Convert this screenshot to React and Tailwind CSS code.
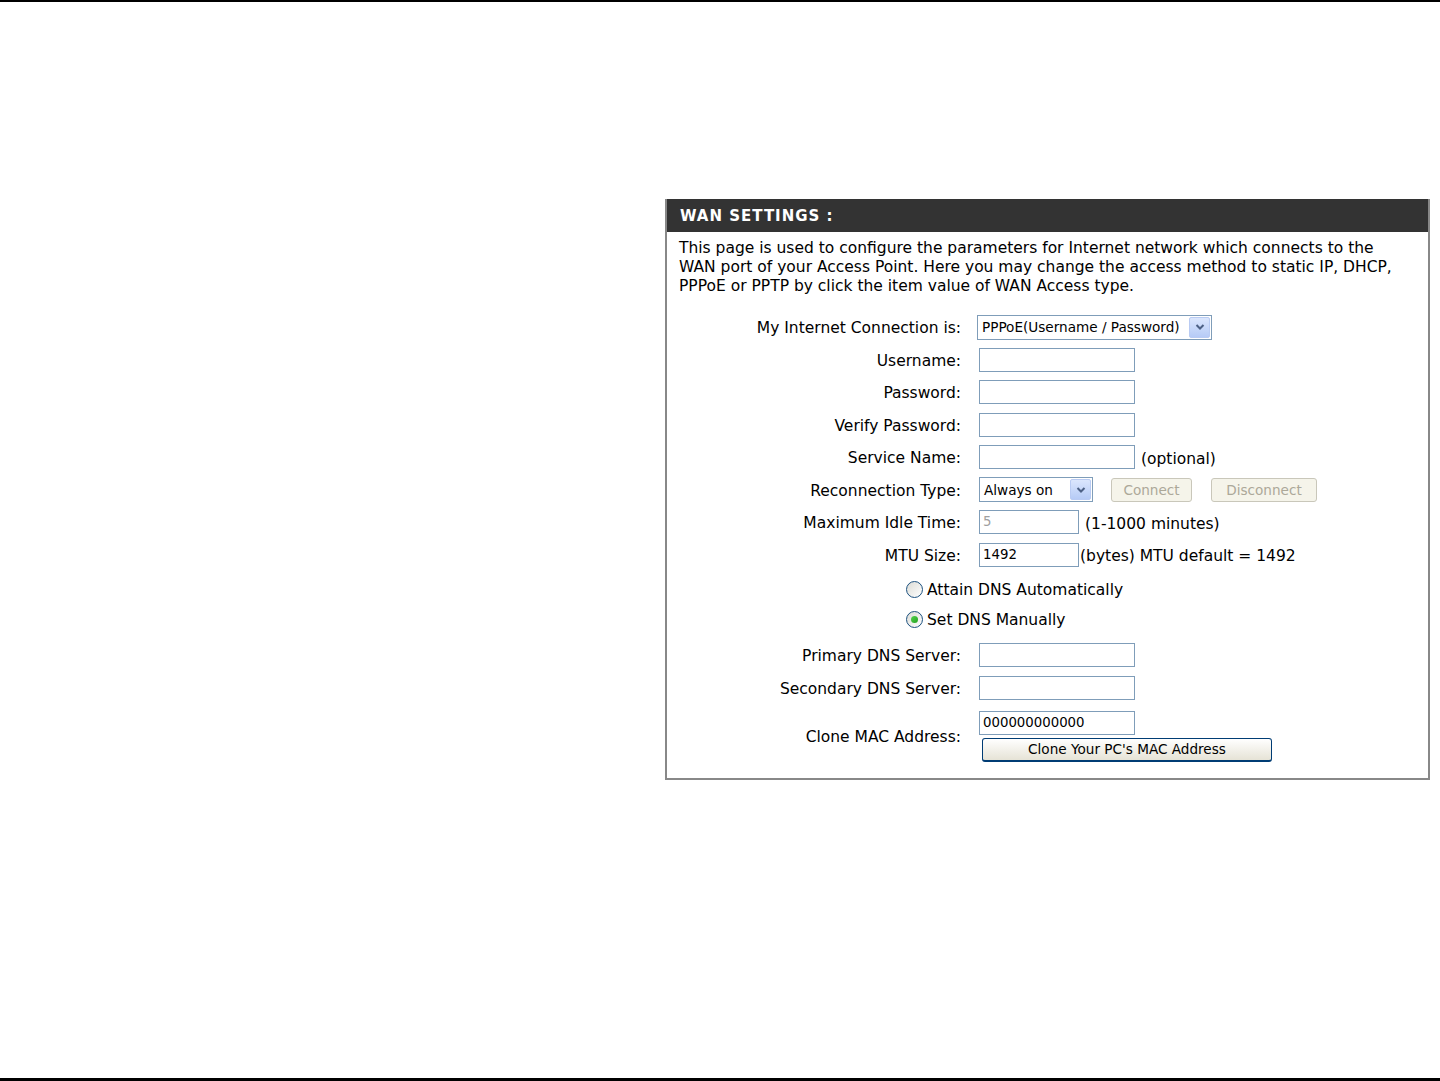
import React from 'react';

const font = { fontFamily: '"DejaVu Sans", Verdana, sans-serif' };

function Chevron() {
  return (
    <svg width="10" height="8" viewBox="0 0 10 8">
      <path d="M1.5 2 L5 5.5 L8.5 2" fill="none" stroke="#4d6185" strokeWidth="2" />
    </svg>
  );
}

function Select({ value, width }) {
  return (
    <div
      className={`flex items-center h-[25px] border border-[#7f9db9] bg-white pl-[4px] pr-[1px] ${width}`}
    >
      <span className="flex-1 text-[13.6px] text-black whitespace-nowrap">{value}</span>
      <div className="w-[21px] h-[21px] rounded-[2px] border border-[#b9cbf3] bg-gradient-to-b from-[#dbe6fd] to-[#b6cbf6] flex items-center justify-center">
        <Chevron />
      </div>
    </div>
  );
}

function Input({ value = '', width = 'w-[156px]', muted }) {
  return (
    <div
      className={`h-[24px] border border-[#7f9db9] bg-white px-[3px] flex items-center text-[13.3px] ${width} ${
        muted ? 'text-[#a0a0a0]' : 'text-black'
      }`}
    >
      {value}
    </div>
  );
}

function Row({ label, children, h = 'h-[32.5px]' }) {
  return (
    <div className={`flex items-center ${h}`}>
      <div className="w-[294px] shrink-0 text-right whitespace-nowrap pt-[3px]">{label}</div>
      <div className="flex items-center pl-[18px]">{children}</div>
    </div>
  );
}

function Radio({ checked, label }) {
  return (
    <div className="flex items-center h-[30px] pl-[239px]">
      <div className="w-[17px] h-[17px] rounded-full border border-[#1c5180] bg-gradient-to-br from-[#dcdcd6] to-white flex items-center justify-center">
        {checked && (
          <div className="w-[7px] h-[7px] rounded-full bg-gradient-to-br from-[#55d34c] to-[#21a121]" />
        )}
      </div>
      <span className="ml-[4px] pt-[3px]">{label}</span>
    </div>
  );
}

export default function App() {
  return (
    <div
      className="h-[1081px] bg-white border-t-2 border-b-[3px] border-black pt-[197px] pl-[665px] text-[15.5px] text-black"
      style={font}
    >
      <div className="w-[765px] border-2 border-[#888888] border-t-0 bg-white">
        <div className="h-[33px] bg-[#333333] flex items-center pl-[13px] pt-[2px] text-white font-bold text-[15px] tracking-[1px]">
          WAN SETTINGS :
        </div>
        <p className="px-[12px] pt-[7px] leading-[19px] whitespace-nowrap">
          This page is used to configure the parameters for Internet network which connects to the
          <br />
          WAN port of your Access Point. Here you may change the access method to static IP, DHCP,
          <br />
          PPPoE or PPTP by click the item value of WAN Access type.
        </p>
        <div className="pt-[15px]">
          <Row label="My Internet Connection is:">
            <div className="-ml-[2px]">
              <Select value="PPPoE(Username / Password)" width="w-[235px]" />
            </div>
          </Row>
          <Row label="Username:">
            <Input />
          </Row>
          <Row label="Password:">
            <Input />
          </Row>
          <Row label="Verify Password:">
            <Input />
          </Row>
          <Row label="Service Name:">
            <Input />
            <span className="ml-[6px] mt-[5px]">(optional)</span>
          </Row>
          <Row label="Reconnection Type:">
            <Select value="Always on" width="w-[114px]" />
            <button className="ml-[18px] h-[24px] w-[81px] rounded-[3px] border border-[#c9c7ba] bg-[#f5f4ea] text-[13.6px] text-[#aca899]">
              Connect
            </button>
            <button className="ml-[19px] h-[24px] w-[106px] rounded-[3px] border border-[#c9c7ba] bg-[#f5f4ea] text-[13.6px] text-[#aca899]">
              Disconnect
            </button>
          </Row>
          <Row label="Maximum Idle Time:">
            <Input value="5" width="w-[100px]" muted />
            <span className="ml-[6px] mt-[4px]">(1-1000 minutes)</span>
          </Row>
          <Row label="MTU Size:">
            <Input value="1492" width="w-[100px]" />
            <span className="ml-[1px] mt-[4px]">(bytes) MTU default = 1492</span>
          </Row>
          <div className="pt-[3px]">
            <Radio label="Attain DNS Automatically" />
            <Radio checked label="Set DNS Manually" />
          </div>
          <div className="pt-[5px]">
            <Row label="Primary DNS Server:">
              <Input />
            </Row>
            <Row label="Secondary DNS Server:">
              <Input />
            </Row>
          </div>
          <div className="flex items-center pt-[7px] pb-[16px]">
            <div className="w-[294px] shrink-0 text-right pt-[3px] whitespace-nowrap">Clone MAC Address:</div>
            <div className="flex flex-col pl-[18px]">
              <Input value="000000000000" />
              <button className="mt-[3px] ml-[3px] h-[24px] w-[290px] rounded-[3px] border border-[#003c74] border-b-2 bg-gradient-to-b from-white to-[#e6e3d6] text-[13.6px] text-black">
                Clone Your PC's MAC Address
              </button>
            </div>
          </div>
        </div>
      </div>
    </div>
  );
}
